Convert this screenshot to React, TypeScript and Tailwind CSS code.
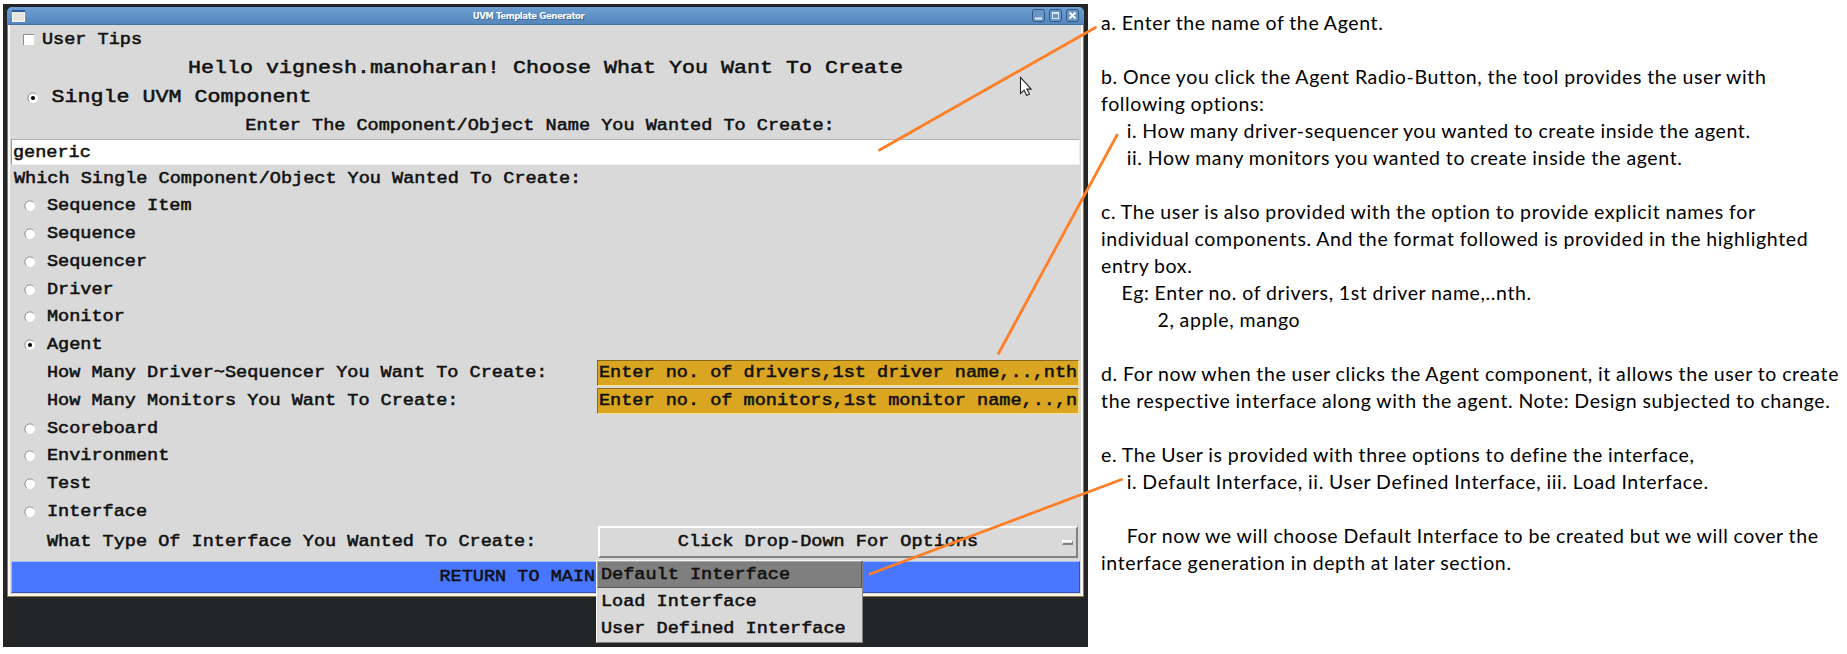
import React from "react";

const mono = "font-['Liberation_Mono','Courier_New',monospace]";

type MonoProps = { children: React.ReactNode; large?: boolean; className?: string };

function Mono({ children, large, className = "" }: MonoProps) {
  return (
    <span
      className={`inline-block scale-y-[0.88] whitespace-pre leading-6 text-[#111] [-webkit-text-stroke:0.6px_#111] ${
        large ? "text-[21.67px]" : "text-[18.55px]"
      } ${mono} ${className}`}
    >
      {children}
    </span>
  );
}

function Radio({ checked }: { checked?: boolean }) {
  return (
    <svg width="12" height="12" viewBox="0 0 12 12" className="shrink-0">
      <circle cx="6" cy="6" r="4.9" fill="#fff" />
      <path d="M2.4 9.6A5 5 0 0 1 9.4 2.3" fill="none" stroke="#8f8f8f" strokeWidth="1" />
      {checked && <circle cx="6" cy="6" r="2.1" fill="#000" />}
    </svg>
  );
}

function Option({ label, checked }: { label: string; checked?: boolean }) {
  return (
    <div className="flex h-[27.8px] items-center pl-[14px]">
      <Radio checked={checked} />
      <Mono className="ml-[11px]">{label}</Mono>
    </div>
  );
}

function Question({ label, value }: { label: string; value: string }) {
  return (
    <div className="flex h-[27.8px] items-center">
      <Mono className="w-[587px] shrink-0 pl-[37px]">{label}</Mono>
      <div className="flex h-[26px] w-[482px] items-center overflow-hidden border border-t-[#8a6a1c] border-r-[#f5d98a] border-b-[#fbe08a] border-l-[#8a6a1c] bg-[#daa520] pl-px">
        <Mono>{value}</Mono>
      </div>
    </div>
  );
}

function WindowButton({ children }: { children: React.ReactNode }) {
  return (
    <svg width="13" height="13" viewBox="0 0 13 13">
      <rect x="0.5" y="0.5" width="12" height="12" rx="2" fill="#6795c8" stroke="#31587f" />
      {children}
    </svg>
  );
}

function TitleBar() {
  return (
    <div className="flex h-[18px] items-center rounded-t-[5px] border-b border-[#44719f] bg-linear-to-b from-[#6e9fd3] to-[#5486bd] px-[5px]">
      <svg width="13" height="12" viewBox="0 0 13 12">
        <rect x="0.5" y="0.5" width="12" height="11" fill="#e6e6e0" stroke="#f7f7f2" />
        <rect width="13" height="2" fill="#2f5c9c" />
      </svg>
      <div className="flex-1 text-center font-['DejaVu_Sans',sans-serif] text-[8.6px] leading-3 font-bold tracking-[-0.45px] text-white [text-shadow:1px_1px_0_#3c6590]">
        UVM Template Generator
      </div>
      <div className="flex gap-[4px]">
        <WindowButton>
          <path d="M3 9.5h7" stroke="#e8f1fb" strokeWidth="2" />
        </WindowButton>
        <WindowButton>
          <rect x="3.5" y="3.5" width="6" height="6" fill="none" stroke="#d8e8f8" />
          <path d="M3 4h7" stroke="#d8e8f8" strokeWidth="2" />
        </WindowButton>
        <WindowButton>
          <path d="M3.5 3.5l6 6m0-6l-6 6" stroke="#fff" strokeWidth="2" />
        </WindowButton>
      </div>
    </div>
  );
}

function GeneratorWindow() {
  return (
    <div className="relative mt-[3px] ml-1 h-[590px] w-[1077px]">
      <TitleBar />
      <div className="h-[572px] border border-t-0 border-[#8a7b50] bg-[#fdf8ea] px-[2px] pb-[2px]">
        <div className="flex h-[569px] flex-col bg-[#d9d9d9]">
          <div className="flex h-[29px] items-center pl-[13px]">
            <span className="size-[11px] border-t border-l border-[#8f8f8f] bg-white" />
            <Mono className="ml-[8px]">User Tips</Mono>
          </div>
          <div className="flex h-7 items-center justify-center pt-[2px]">
            <Mono large>Hello vignesh.manoharan! Choose What You Want To Create</Mono>
          </div>
          <div className="flex h-[30px] items-center pt-px pl-[17px]">
            <Radio checked />
            <Mono large className="ml-[12.5px]">Single UVM Component</Mono>
          </div>
          <div className="flex h-[27px] items-center justify-center pr-[11px]">
            <Mono>Enter The Component/Object Name You Wanted To Create:</Mono>
          </div>
          <div className="mr-px ml-px flex h-[26px] items-center border border-t-[#b0b0b0] border-r-[#eee] border-b-[#eee] border-l-[#999] bg-white pt-[2px] pl-px">
            <Mono>generic</Mono>
          </div>
          <div className="flex h-[27.3px] items-center pl-[4px]">
            <Mono>Which Single Component/Object You Wanted To Create:</Mono>
          </div>
          <Option label="Sequence Item" />
          <Option label="Sequence" />
          <Option label="Sequencer" />
          <Option label="Driver" />
          <Option label="Monitor" />
          <Option label="Agent" checked />
          <Question label="How Many Driver~Sequencer You Want To Create:" value="Enter no. of drivers,1st driver name,..,nth" />
          <Question label="How Many Monitors You Want To Create:" value="Enter no. of monitors,1st monitor name,..,n" />
          <Option label="Scoreboard" />
          <Option label="Environment" />
          <Option label="Test" />
          <Option label="Interface" />
          <div className="mt-[0.2px] flex h-8 items-center">
            <Mono className="w-[588px] shrink-0 pt-px pl-[37px]">What Type Of Interface You Wanted To Create:</Mono>
            <div className="flex h-8 w-[480px] items-center border-2 border-t-white border-r-[#828282] border-b-[#828282] border-l-white">
              <Mono className="flex-1 pt-px pr-[6px] text-center">Click Drop-Down For Options</Mono>
              <span className="mr-[3px] h-[5px] w-[11px] border-t-2 border-r border-b-2 border-l border-t-white border-r-[#828282] border-b-[#828282] border-l-white" />
            </div>
          </div>
          <div className="mx-px mt-[2.5px] flex h-8 items-center border border-t-[#a6bcff] border-r-[#3653b0] border-b-[#3653b0] border-l-[#a6bcff] bg-[#4876ff] pl-[427.5px]">
            <Mono>RETURN TO MAIN</Mono>
          </div>
        </div>
      </div>
      <div className="absolute top-[553px] left-[589px] h-[83px] w-[267px] border border-t-[#f4f4f4] border-r-[#828282] border-b-[#828282] border-l-[#f4f4f4] bg-[#d9d9d9]">
        <div className="flex h-[27px] items-center border border-t-[#a8a8a8] border-r-[#555] border-b-[#555] border-l-[#a8a8a8] bg-[#7f7f7f] pl-[3px]">
          <Mono>Default Interface</Mono>
        </div>
        <div className="flex h-[27px] items-center pl-[4px]">
          <Mono>Load Interface</Mono>
        </div>
        <div className="flex h-[27px] items-center pl-[4px]">
          <Mono>User Defined Interface</Mono>
        </div>
      </div>
    </div>
  );
}

const notes = [
  "a. Enter the name of the Agent.",
  "",
  "b. Once you click the Agent Radio-Button, the tool provides the user with",
  "following options:",
  "     i. How many driver-sequencer you wanted to create inside the agent.",
  "     ii. How many monitors you wanted to create inside the agent.",
  "",
  "c. The user is also provided with the option to provide explicit names for",
  "individual components. And the format followed is provided in the highlighted",
  "entry box.",
  "    Eg: Enter no. of drivers, 1st driver name,..nth.",
  "           2, apple, mango",
  "",
  "d. For now when the user clicks the Agent component, it allows the user to create",
  "the respective interface along with the agent. Note: Design subjected to change.",
  "",
  "e. The User is provided with three options to define the interface,",
  "     i. Default Interface, ii. User Defined Interface, iii. Load Interface.",
  "",
  "     For now we will choose Default Interface to be created but we will cover the",
  "interface generation in depth at later section.",
];

function Pointers() {
  return (
    <svg className="pointer-events-none absolute inset-0" width="1847" height="654" viewBox="0 0 1847 654">
      <g stroke="#ff7f27" strokeWidth="2.8" strokeLinecap="round">
        <path d="M879.5 150L1095.5 27.5" />
        <path d="M998.5 353.5L1117 135" />
        <path d="M870 574L1121.5 479.5" />
      </g>
      <path
        d="M1020.5 77.5v16l3.6-3.3 2.6 5.2 2.7-1.3-2.5-5h4.3z"
        fill="#fff"
        stroke="#222"
        strokeWidth="1.1"
      />
    </svg>
  );
}

export default function App() {
  return (
    <div className="relative flex h-[654px] w-[1847px] overflow-hidden bg-white pt-1 pl-[3px]">
      <div className="h-[643px] w-[1085px] shrink-0 bg-[#232527]">
        <GeneratorWindow />
      </div>
      <div className="pt-[5px] pl-[13px] font-['Lato',sans-serif] text-[19.5px] leading-[27px] tracking-[0.64px] text-black [word-spacing:-0.5px]">
        {notes.map((line, i) => (
          <p key={i} className="h-[27px] whitespace-pre">
            {line}
          </p>
        ))}
      </div>
      <Pointers />
    </div>
  );
}
